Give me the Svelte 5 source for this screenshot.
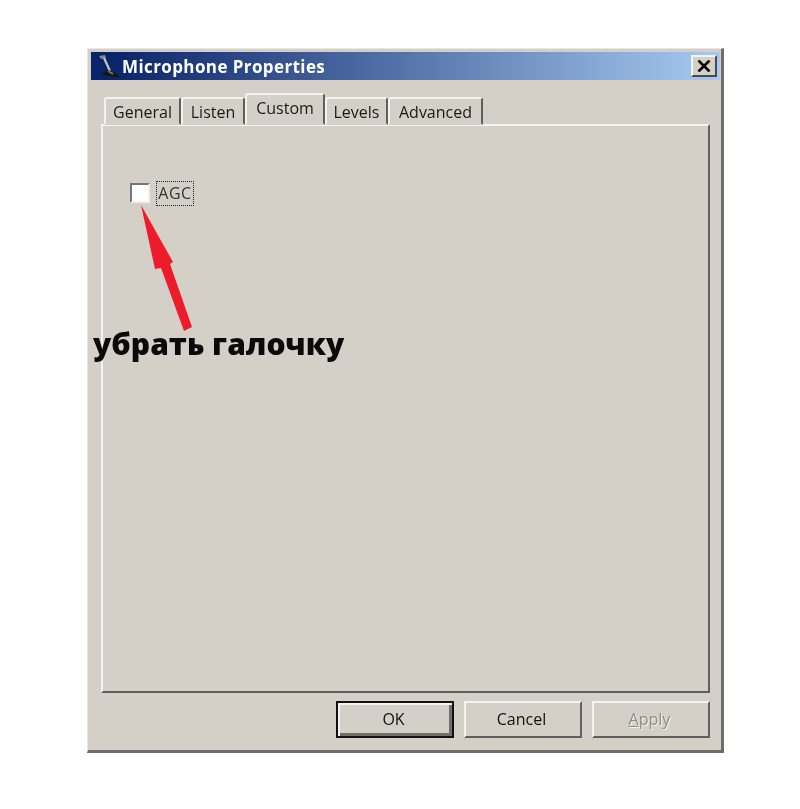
<script>
  const tabs = [
    { label: 'General', width: 77 },
    { label: 'Listen', width: 64 },
    { label: 'Custom', width: 80, active: true },
    { label: 'Levels', width: 63 },
    { label: 'Advanced', width: 95 }
  ];
</script>

<div class="page">
  <div class="window">
    <div class="titlebar">
      <svg class="mic" width="26" height="26" viewBox="0 0 26 26" aria-hidden="true">
        <path d="M3 3 L9 2 L10 5 L5 6 Z" fill="#8a8a80" />
        <path d="M8 5 L14 18" stroke="#c9c7bd" stroke-width="2.2" fill="none" />
        <path d="M5 21 L13 17 L22 22 L24 25 L18 24 Z" fill="#16160f" />
        <path d="M12 18 L17 21" stroke="#77776f" stroke-width="2" fill="none" />
      </svg>
      <span class="title">Microphone Properties</span>
      <button class="close" aria-label="Close">
        <svg width="14" height="12" viewBox="0 0 14 12"><path d="M1.5 0.5 L12.5 11.5 M12.5 0.5 L1.5 11.5" stroke="#000" stroke-width="2.6" fill="none" /></svg>
      </button>
    </div>

    <div class="client">
      <div class="tabs">
        {#each tabs as tab}
          <div class="tab" class:active={tab.active} style="width: {tab.width}px">{tab.label}</div>
        {/each}
      </div>

      <div class="panel">
        <label class="agc">
          <span class="check"></span>
          <span class="agc-text">AGC</span>
        </label>
      </div>

      <div class="footer">
        <button class="btn default">OK</button>
        <button class="btn">Cancel</button>
        <button class="btn disabled"><span><u>A</u>pply</span></button>
      </div>
    </div>
  </div>

  <svg class="arrow" width="800" height="400" viewBox="0 0 800 400" aria-hidden="true">
    <polygon points="141,205 173,262 170,264 192,327 184,331 161,268 155,269" fill="#ee1c2b" />
  </svg>
  <div class="note">убрать галочку</div>
</div>

<style>
  :global(body) {
    margin: 0;
    background: #fff;
  }

  .page {
    position: relative;
    width: 800px;
    height: 809px;
    padding: 48px 0 0 87px;
    box-sizing: border-box;
    overflow: hidden;
    font-family: "DejaVu Sans", sans-serif;
  }

  .window {
    width: 637px;
    height: 705px;
    box-sizing: border-box;
    padding: 3px 3px 0 4px;
    background: #d4d0c8;
    border-top: 1px solid #e8e6e0;
    border-left: 1px solid #e8e6e0;
    border-right: 3px solid #6d6d6a;
    border-bottom: 3px solid #6d6d6a;
    display: flex;
    flex-direction: column;
    filter: blur(0.5px);
  }

  .titlebar {
    flex: none;
    height: 28px;
    margin: 0 -2px 0 -1px;
    display: flex;
    align-items: center;
    padding: 0 3px 0 5px;
    background: linear-gradient(90deg, #0a246a 0%, #0a246a 3%, #a6caf0 100%);
  }

  .mic {
    flex: none;
  }

  .title {
    flex: 1;
    color: #fff;
    font-size: 17px;
    font-weight: 700;
    font-family: "Open Sans", sans-serif;
    letter-spacing: 0.4px;
  }

  .close {
    width: 26px;
    height: 22px;
    padding: 0;
    display: flex;
    align-items: center;
    justify-content: center;
    background: #d4d0c8;
    border: 2px solid;
    border-color: #f4f3ef #4a4a48 #4a4a48 #f4f3ef;
  }

  .client {
    flex: 1;
    display: flex;
    flex-direction: column;
    padding: 0 8px 0 9px;
    min-height: 0;
  }

  .tabs {
    flex: none;
    height: 45px;
    display: flex;
    align-items: flex-end;
    padding-left: 3px;
    box-sizing: border-box;
    position: relative;
    z-index: 1;
    margin-bottom: -1px;
  }

  .tab {
    height: 28px;
    box-sizing: border-box;
    border: 2px solid;
    border-color: #f4f3ef #5f5f5c #d4d0c8 #f4f3ef;
    border-radius: 3px 3px 0 0;
    background: #d4d0c8;
    color: #1a1a1a;
    font-size: 16px;
    font-family: "Open Sans", sans-serif;
    display: flex;
    align-items: center;
    justify-content: center;
    padding-top: 1px;
  }

  .tab.active {
    height: 32px;
    padding-bottom: 3px;
    padding-top: 0;
  }

  .panel {
    flex: none;
    height: 569px;
    box-sizing: border-box;
    padding: 55px 0 0 27px;
    background: #d4d0c8;
    border: 2px solid;
    border-color: #f4f3ef #5f5f5c #5f5f5c #f4f3ef;
  }

  .agc {
    display: flex;
    align-items: center;
    gap: 6px;
    height: 24px;
  }

  .check {
    width: 20px;
    height: 20px;
    box-sizing: border-box;
    background: #fff;
    border: 2px solid;
    border-color: #77777a #f0efea #f0efea #77777a;
  }

  .agc-text {
    height: 25px;
    width: 38px;
    box-sizing: border-box;
    border: 1px dotted #222;
    display: flex;
    align-items: center;
    justify-content: center;
    font-family: "Open Sans", sans-serif;
    font-size: 16px;
    letter-spacing: 0.6px;
    color: #333;
  }

  .footer {
    flex: none;
    display: flex;
    justify-content: flex-end;
    gap: 10px;
    margin-top: 8px;
  }

  .btn {
    width: 118px;
    height: 37px;
    padding: 0 3px 2px 0;
    box-sizing: border-box;
    background: #d4d0c8;
    border: 2px solid;
    border-color: #f4f3ef #5f5f5c #5f5f5c #f4f3ef;
    font-family: "Open Sans", sans-serif;
    font-size: 16px;
    color: #111;
  }

  .btn.default {
    outline: 2px solid #111;
    outline-offset: -2px;
    box-shadow: inset 2px 2px 0 #f4f3ef, inset -3px -3px 0 #6f6f6c;
  }

  .btn.disabled {
    color: #8f8d87;
    text-shadow: 1px 1px 0 #f4f3ef;
  }

  .arrow {
    position: absolute;
    left: 0;
    top: 0;
    pointer-events: none;
    filter: blur(0.4px);
  }

  .note {
    position: absolute;
    left: 93px;
    top: 322px;
    font-family: "Open Sans", sans-serif;
    font-weight: 800;
    font-size: 30px;
    line-height: 44px;
    color: #0a0a0a;
    white-space: nowrap;
    filter: blur(0.4px);
  }
</style>
